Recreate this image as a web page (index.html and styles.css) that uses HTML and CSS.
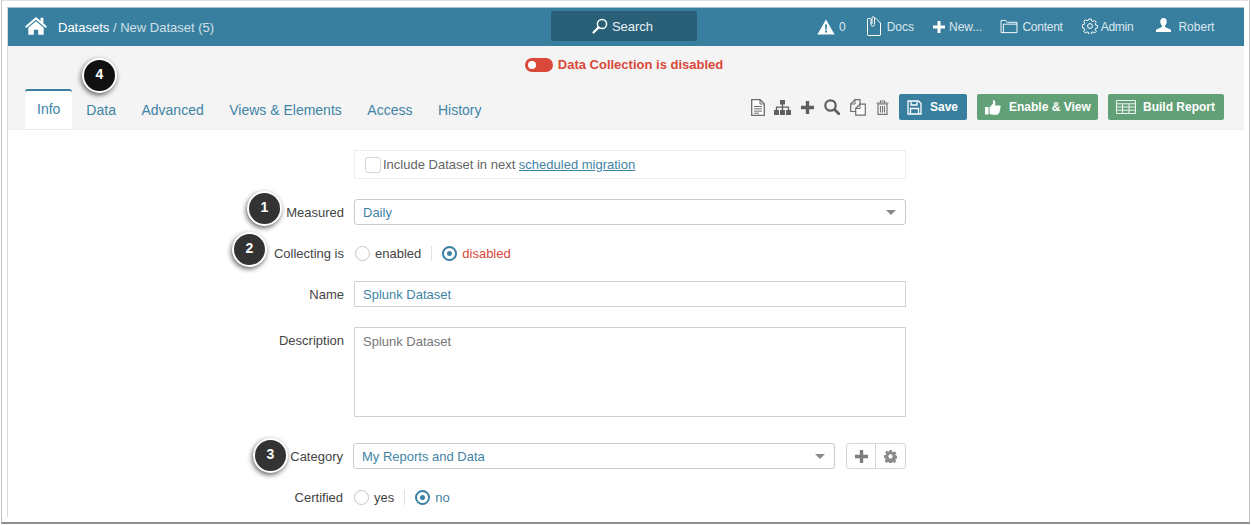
FILE: index.html
```html
<!DOCTYPE html>
<html lang="en">
<head>
<meta charset="utf-8">
<title>New Dataset</title>
<link rel="stylesheet" href="styles.css">
</head>
<body>
<div class="frame">
<div class="window">
  <header class="topbar">
    <div class="crumbs">
      <svg class="home" viewBox="0 0 24 20"><path d="M12 .8 0 11l1.4 1.6L12 3.6l10.600 9L24 11l-4-3.400V1.600h-3v3.400z"/><path d="M12 5.400 3.600 12.500V20h6v-5.500h4.800V20h6v-7.500z"/></svg>
      <span class="crumb-main">Datasets</span><span class="crumb-rest">&nbsp;/ New Dataset (5)</span>
    </div>
    <div class="search">
      <svg viewBox="0 0 16 16" class="search-icon"><circle cx="10" cy="6" r="4.600" fill="none" stroke="#fff" stroke-width="1.500"/><path d="M6.600 9.400 1.500 14.500" stroke="#fff" stroke-width="2.200" stroke-linecap="round"/></svg>
      <span>Search</span>
    </div>
    <nav class="topnav">
      <span class="nav-item n-alert"><svg viewBox="0 0 18 16" class="i-alert"><path fill-rule="evenodd" d="M9 .5 17.600 15.500H.4zM8 5.500l.3 5.200h1.400l.3-5.200zM8 11.600v2h2v-2z"/></svg>0</span>
      <span class="nav-item n-docs"><svg viewBox="0 0 14 20" class="i-docs"><path d="M3.500 2.500H1.200a.7.7 0 0 0-.7.7v15.600c0 .4.3.7.7.7h11.600c.4 0 .7-.3.7-.7V7L9 2.500H8" fill="none" stroke="#fff"/><path d="M4 3v5.500c0 2.200 3.500 2.200 3.500 0V2C7.500.2 5 .2 5 2v6" fill="none" stroke="#fff"/></svg>Docs</span>
      <span class="nav-item n-new"><svg viewBox="0 0 12 12" class="i-plus"><path d="M4.500 0h3v4.500H12v3H7.500V12h-3V7.500H0v-3h4.500z"/></svg>New...</span>
      <span class="nav-item n-content"><svg viewBox="0 0 18 16" class="i-folder"><path d="M.5 14.500v-13h5l1.500 2h10.500v11z" fill="none" stroke="#fff"/><path d="M3 15V5.500h14.500" fill="none" stroke="#fff"/></svg><span class="tight">Content</span></span>
      <span class="nav-item n-admin"><svg viewBox="0 0 16 16" class="i-gear"><circle cx="8" cy="8" r="2.400" fill="none" stroke="#fff"/><path d="M6.800 1h2.400l.4 2 1.300.5 1.700-1.100 1.700 1.700-1.100 1.700.5 1.300 2 .4v2.400l-2 .4-.5 1.300 1.100 1.700-1.700 1.700-1.700-1.100-1.300.5-.4 2H6.800l-.4-2-1.300-.5-1.700 1.100-1.700-1.700 1.100-1.700-.5-1.300-2-.4V6.800l2-.4.5-1.300-1.100-1.700 1.700-1.700 1.700 1.100 1.300-.5z" fill="none" stroke="#fff"/></svg><span class="tight">Admin</span></span>
      <span class="nav-item n-user"><svg viewBox="0 0 16 16" class="i-user"><path d="M8 0c2.200 0 3.500 1.600 3.500 3.800 0 1.800-.8 3.400-1.800 4.200v1.500L16 12.500V15H0v-2.500l6.300-3V8C5.300 7.200 4.500 5.600 4.500 3.800 4.500 1.600 5.800 0 8 0z"/></svg>Robert</span>
    </nav>
  </header>

  <section class="subhead">
    <div class="status">
      <span class="toggle"><span class="knob"></span></span>
      <span>Data Collection is disabled</span>
    </div>
    <div class="tabrow">
      <ul class="tabs">
        <li class="tab active">Info</li>
        <li class="tab">Data</li>
        <li class="tab">Advanced</li>
        <li class="tab">Views &amp; Elements</li>
        <li class="tab">Access</li>
        <li class="tab">History</li>
      </ul>
      <div class="tools">
        <svg class="t t-doc" viewBox="0 0 14 17"><path d="M.7.7h8.300l4.300 4.300v11.300H.7z" fill="#fff" stroke="#6d6d6d" stroke-width="1.300"/><path d="M9 .7V5h4.300M3 7.500h8M3 9.800h8M3 12.100h8M3 14.200h5" fill="none" stroke="#6d6d6d"/></svg>
        <svg class="t t-org" viewBox="0 0 17 15"><path d="M6 0h5v4.500H6zM0 10h5v5H0zM6 10h5v5H6zM12 10h5v5h-5z" fill="#5f5f5f"/><path d="M8.500 4v6M2.500 10V7.200h12V10" fill="none" stroke="#5f5f5f" stroke-width="1.300"/></svg>
        <svg class="t t-plus" viewBox="0 0 13 13"><path d="M4.800 0h3.400v4.800H13v3.400H8.200V13H4.800V8.200H0V4.800h4.800z" fill="#5f5f5f"/></svg>
        <svg class="t t-search" viewBox="0 0 16 16"><circle cx="6.500" cy="6.500" r="5.200" fill="none" stroke="#5f5f5f" stroke-width="2.200"/><path d="m10.500 10.500 4.300 4.300" stroke="#5f5f5f" stroke-width="2.800" stroke-linecap="round"/></svg>
        <svg class="t t-copy" viewBox="0 0 16 17"><path d="M10 5.500V.7H5L.7 5v7.500h5" fill="none" stroke="#6d6d6d" stroke-width="1.200"/><path d="M5.700 9.500 10 5.200h5.300v11H5.700z" fill="#fff" stroke="#6d6d6d" stroke-width="1.200"/><path d="M5 .7V5H.7M10 5.200v4.300H5.700" fill="none" stroke="#6d6d6d"/></svg>
        <svg class="t t-trash" viewBox="0 0 13 15"><path d="M2 4h9v10.300H2z" fill="none" stroke="#777" stroke-width="1.200"/><path d="M.5 3h12M4.500 3V1h4v2M4.500 6v6.500M6.500 6v6.500M8.500 6v6.500" fill="none" stroke="#777" stroke-width="1.100"/></svg>
        <button class="btn btn-blue btn-save"><svg viewBox="0 0 15 15" class="b-i"><path d="M1 1h10.500L14 3.500V14H1z" fill="none" stroke="#fff" stroke-width="1.300"/><path d="M4 1.500v3.500h6V1.500M3.500 14V8.500h8V14" fill="none" stroke="#fff" stroke-width="1.300"/></svg>Save</button>
        <button class="btn btn-green btn-enable"><svg viewBox="0 0 16 15" class="b-i b-thumb"><path d="M0 7h3.500v7.500H0zM4.500 7.500 8 3.500V0c2 0 2.800 2 2 5.500h4.500c1.600 0 1.600 2.300.4 2.700.8.800.6 2-.3 2.500.4 1-.1 1.900-.9 2.200.2 1-.4 1.800-1.700 1.800H7.500c-1.400 0-2-.7-3-.9z" fill="#fff"/></svg>Enable &amp; View</button>
        <button class="btn btn-green btn-build"><svg viewBox="0 0 20 14" class="b-i b-table"><path d="M.5.500h19v13H.500zM.500 3.800h19M.500 7h19M.500 10.200h19M6.500 3.800v9.700M13 3.800v9.700" fill="none" stroke="#eef5f0"/></svg>Build Report</button>
      </div>
    </div>
  </section>

  <main class="form">
    <div class="row r-mig">
      <div class="lbl"></div>
      <div class="mig"><span class="check"></span>Include Dataset in next&nbsp;<a class="link">scheduled migration</a></div>
    </div>
    <div class="row r-measured">
      <div class="lbl">Measured</div>
      <div class="field select"><span>Daily</span><i class="caret"></i></div>
      <span class="badge b1">1</span>
    </div>
    <div class="row r-collect">
      <div class="lbl">Collecting is</div>
      <div class="radios">
        <span class="radio"></span><span class="opt">enabled</span>
        <span class="sep"></span>
        <span class="radio on"></span><span class="opt red">disabled</span>
      </div>
      <span class="badge b2">2</span>
    </div>
    <div class="row r-name">
      <div class="lbl">Name</div>
      <div class="field square"><span>Splunk Dataset</span></div>
    </div>
    <div class="row r-desc">
      <div class="lbl lbl-top">Description</div>
      <div class="field square area"><span>Splunk Dataset</span></div>
    </div>
    <div class="row r-cat">
      <div class="lbl">Category</div>
      <div class="catwrap">
        <div class="field select cat"><span>My Reports and Data</span><i class="caret"></i></div>
        <div class="btngroup">
          <span class="gb"><svg viewBox="0 0 13 13" class="g-i"><path d="M4.800 0h3.400v4.800H13v3.400H8.200V13H4.800V8.200H0V4.800h4.800z" fill="#7d7d7d"/></svg></span>
          <span class="gb"><svg viewBox="0 0 14 14" class="g-i"><path fill="#8a8a8a" fill-rule="evenodd" d="M5.700 0h2.600l.4 1.900 1.100.5L11.500 1.300l1.800 1.800-1.100 1.700.5 1.100 1.900.4v2.600l-1.900.4-.5 1.100 1.100 1.700-1.800 1.800-1.700-1.100-1.100.5-.4 1.900H5.700l-.4-1.900-1.100-.5-1.700 1.100L.7 11.600l1.100-1.700-.5-1.100L0 8.300V5.700l1.900-.4.5-1.100L1.300 2.500 3.100.7l1.700 1.100 1.100-.5zM7 4.700a2.300 2.300 0 1 0 0 4.600 2.300 2.300 0 0 0 0-4.600z"/></svg></span>
        </div>
      </div>
      <span class="badge b3">3</span>
    </div>
    <div class="row r-cert">
      <div class="lbl">Certified</div>
      <div class="radios">
        <span class="radio"></span><span class="opt">yes</span>
        <span class="sep"></span>
        <span class="radio on"></span><span class="opt blue">no</span>
      </div>
    </div>
  </main>
  <span class="badge b4">4</span>
</div>
</div>
</body>
</html>
```
FILE: styles.css
```css
* { box-sizing: border-box; }
html, body { margin: 0; height: 100%; overflow: hidden; background: #fff; }
body { padding: 0 1px; font-family: "Liberation Sans", Arial, sans-serif; font-size: 13px; color: #444; }
.frame { width: 1249px; height: 524px; border: 1px solid #c4c4c4; border-top-color: #e2e2e2; border-bottom: 2px solid #8d8d8d; padding: 6px 0 0 5px; background: #fff; }
.window { position: relative; width: 1237px; height: 510px; border-left: 1px solid #d3dce2; border-top: 1px solid #a9c3d1; background: #fff; overflow: hidden; }

.topbar { display: flex; align-items: center; height: 38px; background: #387f9f; color: #dbe8ee; position: relative; }
.crumbs { display: flex; align-items: center; width: 543px; padding-left: 17px; font-size: 13px; }
.home { width: 22px; height: 19px; fill: #fff; margin-right: 11px; margin-top: -3px; }
.crumb-main { color: #fff; }
.crumb-rest { color: #cfe0e8; }
.search { display: flex; align-items: center; justify-content: center; gap: 4px; width: 146px; height: 30px; margin-bottom: 2px; background: #2a5f78; border-radius: 2px; color: #e8f0f4; font-size: 13px; padding-right: 3px; }
.search-icon { width: 16px; height: 16px; }
.topnav { display: flex; align-items: center; font-size: 12px; margin-left: 120px; }
.nav-item { display: flex; align-items: center; white-space: nowrap; }
.nav-item svg { fill: #fff; flex: none; }
.i-alert { width: 18px; height: 16px; margin-right: 4px; }
.n-docs { margin-left: 21px; }
.i-docs { width: 14px; height: 20px; margin-right: 6px; margin-top: -3px; }
.n-new { margin-left: 19px; }
.i-plus { width: 12px; height: 12px; margin-right: 4px; }
.n-content { margin-left: 18px; }
.tight { letter-spacing: -.25px; }
.i-folder { width: 18px; height: 15px; margin-right: 4px; margin-top: -1px; }
.n-admin { margin-left: 19px; }
.i-gear { width: 16px; height: 16px; margin-right: 3px; margin-top: -2px; }
.n-user { margin-left: 23px; }
.i-user { width: 15px; height: 15px; margin-right: 7px; margin-top: -3px; }

.subhead { height: 84px; background: #f4f4f4; border-bottom: 1px solid #ececec; display: flex; flex-direction: column; }
.status { display: flex; align-items: center; justify-content: center; gap: 5px; height: 38px; padding-right: 4px; color: #d9483b; font-weight: bold; font-size: 13px; }
.toggle { display: flex; align-items: center; width: 28px; height: 14px; border-radius: 7px; background: #d9483b; padding-left: 3px; }
.knob { width: 8px; height: 8px; border-radius: 50%; background: #fff; }
.tabrow { display: flex; justify-content: space-between; align-items: flex-start; padding-left: 17px; flex: 1; margin-top: 6px; }
.tabs { display: flex; list-style: none; margin: 0; padding: 0; font-size: 14px; color: #3f84a5; }
.tab { height: 40px; padding: 13px 12.5px 0 13px; white-space: nowrap; }
.tab.active { background: #fff; border-top: 2px solid #387f9f; border-radius: 3px 3px 0 0; padding: 10px 12px 0; margin-right: 1px; }
.tools { display: flex; align-items: center; padding-right: 20px; margin-top: 5px; }
.t { flex: none; }
.t-doc { width: 14px; height: 17px; }
.t-org { width: 17px; height: 15px; margin-left: 9px; }
.t-plus { width: 13px; height: 13px; margin-left: 10px; }
.t-search { width: 16px; height: 16px; margin-left: 10px; }
.t-copy { width: 16px; height: 17px; margin-left: 10px; }
.t-trash { width: 13px; height: 15px; margin-left: 10px; }
.btn { display: flex; align-items: center; height: 26px; border: 0; border-radius: 2px; color: #fff; font: bold 12px "Liberation Sans", Arial, sans-serif; padding: 0 0 0 8px; }
.btn-blue { background: #387f9f; }
.btn-green { background: #62a077; }
.b-i { width: 15px; height: 15px; flex: none; margin-right: 8px; }
.btn-save { width: 68px; margin-left: 10px; }
.btn-enable { width: 121px; margin-left: 10px; }
.b-thumb { width: 16px; margin-right: 8px; }
.btn-build { width: 116px; margin-left: 10px; }
.b-table { width: 20px; height: 14px; margin-right: 7px; }

.form { padding-top: 20px; padding-left: 7px; }
.row { display: flex; position: relative; align-items: center; }
.lbl { width: 339px; text-align: right; padding-right: 10px; color: #444; flex: none; }
.lbl-top { align-self: flex-start; padding-top: 6px; }
.field { width: 552px; height: 26px; border: 1px solid #d2d2d2; color: #3f84a5; display: flex; align-items: center; justify-content: space-between; padding: 0 8px; background: #fff; }
.select { border-radius: 3px; border-color: #ccc; }
.square { border-radius: 0; }
.mig { width: 552px; height: 29px; border: 1px solid #ededed; display: flex; align-items: center; padding-left: 10px; color: #666; }
.check { width: 16px; height: 16px; border: 1px solid #d5d5d5; border-radius: 3px; margin-right: 2px; background: #fff; }
.link { color: #3f84a5; text-decoration: underline; }
.caret { width: 0; height: 0; border-left: 5px solid transparent; border-right: 5px solid transparent; border-top: 5px solid #8a8a8a; margin-right: 1px; }
.r-measured { margin-top: 20px; }
.r-collect { margin-top: 15px; height: 26px; }
.radios { display: flex; align-items: center; margin-left: 1px; }
.radio { width: 15px; height: 15px; border: 1px solid #c5c5c5; border-radius: 50%; background: #fff; flex: none; position: relative; }
.radio.on { border: 2px solid #3a82a3; }
.radio.on::after { content: ""; position: absolute; left: 3px; top: 3px; width: 5px; height: 5px; border-radius: 50%; background: #3a82a3; }
.opt { margin-left: 5px; color: #444; }
.opt.red { color: #d9483b; }
.opt.blue { color: #3f84a5; }
.sep { width: 1px; height: 15px; background: #e2e2e2; margin: 0 10px; }
.r-name { margin-top: 15px; }
.r-desc { margin-top: 20px; align-items: flex-start; }
.area { height: 90px; align-items: flex-start; padding-top: 6px; color: #777; }
.r-cat { margin-top: 26px; }
.r-cat .lbl { width: 338px; }
.catwrap { display: flex; width: 553px; justify-content: space-between; }
.cat { width: 482px; }
.btngroup { display: flex; width: 60px; height: 26px; border: 1px solid #d5d5d5; border-radius: 3px; }
.gb { flex: 1; display: flex; align-items: center; justify-content: center; }
.gb:first-child { flex: none; width: 28px; }
.gb + .gb { border-left: 1px solid #d5d5d5; }
.g-i { width: 13px; height: 13px; }
.r-cert { margin-top: 15px; height: 26px; }
.r-cert .lbl { width: 338px; }

.badge { position: absolute; width: 35px; height: 35px; padding-bottom: 3px; border-radius: 50%; background: #333; border: 2px solid #fff; color: #fff; font-weight: bold; font-size: 14px; display: flex; align-items: center; justify-content: center; box-shadow: -1px 2px 5px rgba(0,0,0,.6); }
.b1 { left: 232px; top: -8px; }
.b2 { left: 217px; top: -8px; }
.b3 { left: 238px; top: -5px; }
.b4 { left: 74px; top: 50px; background: #111; }
```
